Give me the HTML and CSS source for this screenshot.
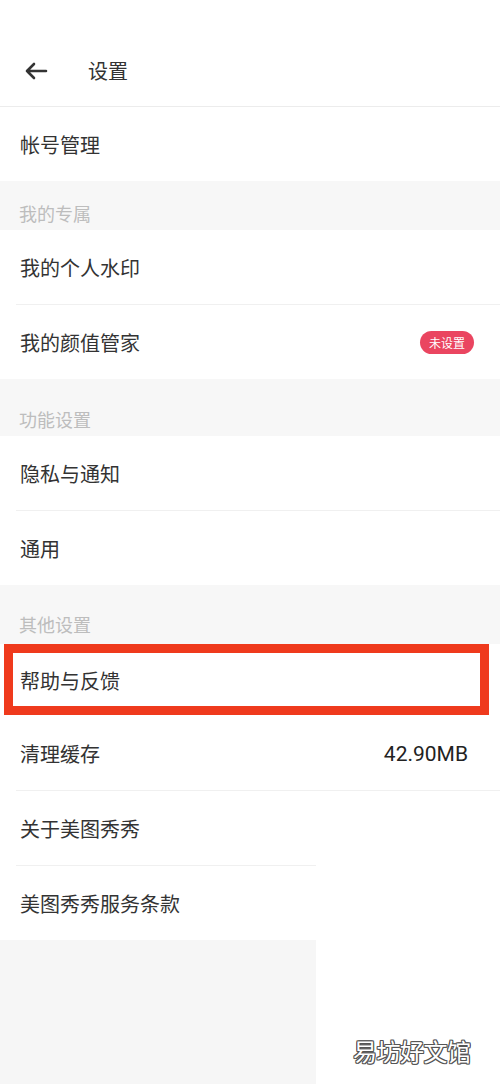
FILE: index.html
```html
<!DOCTYPE html>
<html lang="zh-CN">
<head>
<meta charset="utf-8">
<title>设置</title>
<link rel="stylesheet" href="styles.css">
</head>
<body>
<div class="page">
  <header class="header">
    <svg class="back" width="24" height="18" viewBox="0 0 24 18" aria-hidden="true">
      <path d="M22 9H3M10 2L3 9l7 7" fill="none" stroke="#333" stroke-width="2.6" stroke-linecap="round" stroke-linejoin="round"/>
    </svg>
    <h1 class="title">设置</h1>
  </header>

  <div class="row">帐号管理</div>

  <div class="section s1">我的专属</div>
  <div class="row">我的个人水印</div>
  <div class="divider"></div>
  <div class="row">
    <span>我的颜值管家</span>
    <span class="badge">未设置</span>
  </div>

  <div class="section s2">功能设置</div>
  <div class="row">隐私与通知</div>
  <div class="divider"></div>
  <div class="row">通用</div>

  <div class="section s3">其他设置</div>
  <div class="row highlighted">
    <span>帮助与反馈</span>
    <span class="mark"></span>
  </div>
  <div class="row">
    <span>清理缓存</span>
    <span class="value">42.90MB</span>
  </div>
  <div class="divider"></div>
  <div class="row">关于美图秀秀</div>
  <div class="divider short"></div>
  <div class="row">美图秀秀服务条款</div>

  <div class="footer">
    <div class="footer-grey"></div>
    <div class="footer-white"></div>
  </div>

  <div class="watermark">易坊好文馆</div>
</div>
</body>
</html>
```

FILE: styles.css
```css
* { box-sizing: border-box; }

html, body {
  margin: 0;
  padding: 0;
  background: #ffffff;
}

body {
  font-family: "Noto Sans CJK SC", "Noto Sans", sans-serif;
  color: #333333;
}

.page {
  position: relative;
  width: 500px;
  height: 1084px;
  display: flex;
  flex-direction: column;
  overflow: hidden;
}

.header {
  height: 107px;
  flex: none;
  display: flex;
  align-items: center;
  padding: 36px 0 0 24px;
  border-bottom: 1px solid #ececec;
}

.back {
  display: block;
}

.title {
  margin: 0 0 0 40px;
  font-size: 20px;
  font-weight: 400;
  line-height: 24px;
  color: #333333;
}

.row {
  height: 74px;
  flex: none;
  display: flex;
  align-items: center;
  justify-content: space-between;
  padding: 1px 32px 0 20px;
  font-size: 20px;
  line-height: 24px;
  color: #333333;
  background: #ffffff;
}

.divider {
  height: 1px;
  flex: none;
  margin-left: 16px;
  background: #f0f0f0;
}

.divider.short {
  width: 300px;
}

.section {
  flex: none;
  background: #f7f7f7;
  font-size: 18px;
  line-height: 24px;
  color: #bdbdbd;
  padding-left: 19px;
}

.s1 { height: 49px; padding-top: 20px; }
.s2 { height: 57px; padding-top: 28px; }
.s3 { height: 59px; padding-top: 27px; }

.badge {
  width: 54px;
  height: 23px;
  border-radius: 12px;
  background: #ea4560;
  color: #ffffff;
  font-size: 12px;
  line-height: 23px;
  text-align: center;
  margin-right: -6px;
}

.value {
  font-family: "Roboto", "Noto Sans", sans-serif;
  font-size: 21px;
  color: #222222;
}

.highlighted {
  position: relative;
  height: 72px;
}

.mark {
  position: absolute;
  left: 4px;
  top: 0;
  width: 485px;
  height: 71px;
  border: 9px solid #ef3a1d;
}

.footer {
  flex: 1;
  display: flex;
}

.footer-grey {
  width: 316px;
  background: #f6f6f6;
}

.footer-white {
  flex: 1;
  background: #ffffff;
}

.watermark {
  position: absolute;
  left: 353px;
  top: 1036px;
  font-size: 24px;
  line-height: 30px;
  color: #ffffff;
  letter-spacing: -0.5px;
  text-shadow:
    1px 0 #555, -1px 0 #555, 0 1px #555, 0 -1px #555,
    1px 1px #555, -1px -1px #555, 1px -1px #555, -1px 1px #555;
}
```
